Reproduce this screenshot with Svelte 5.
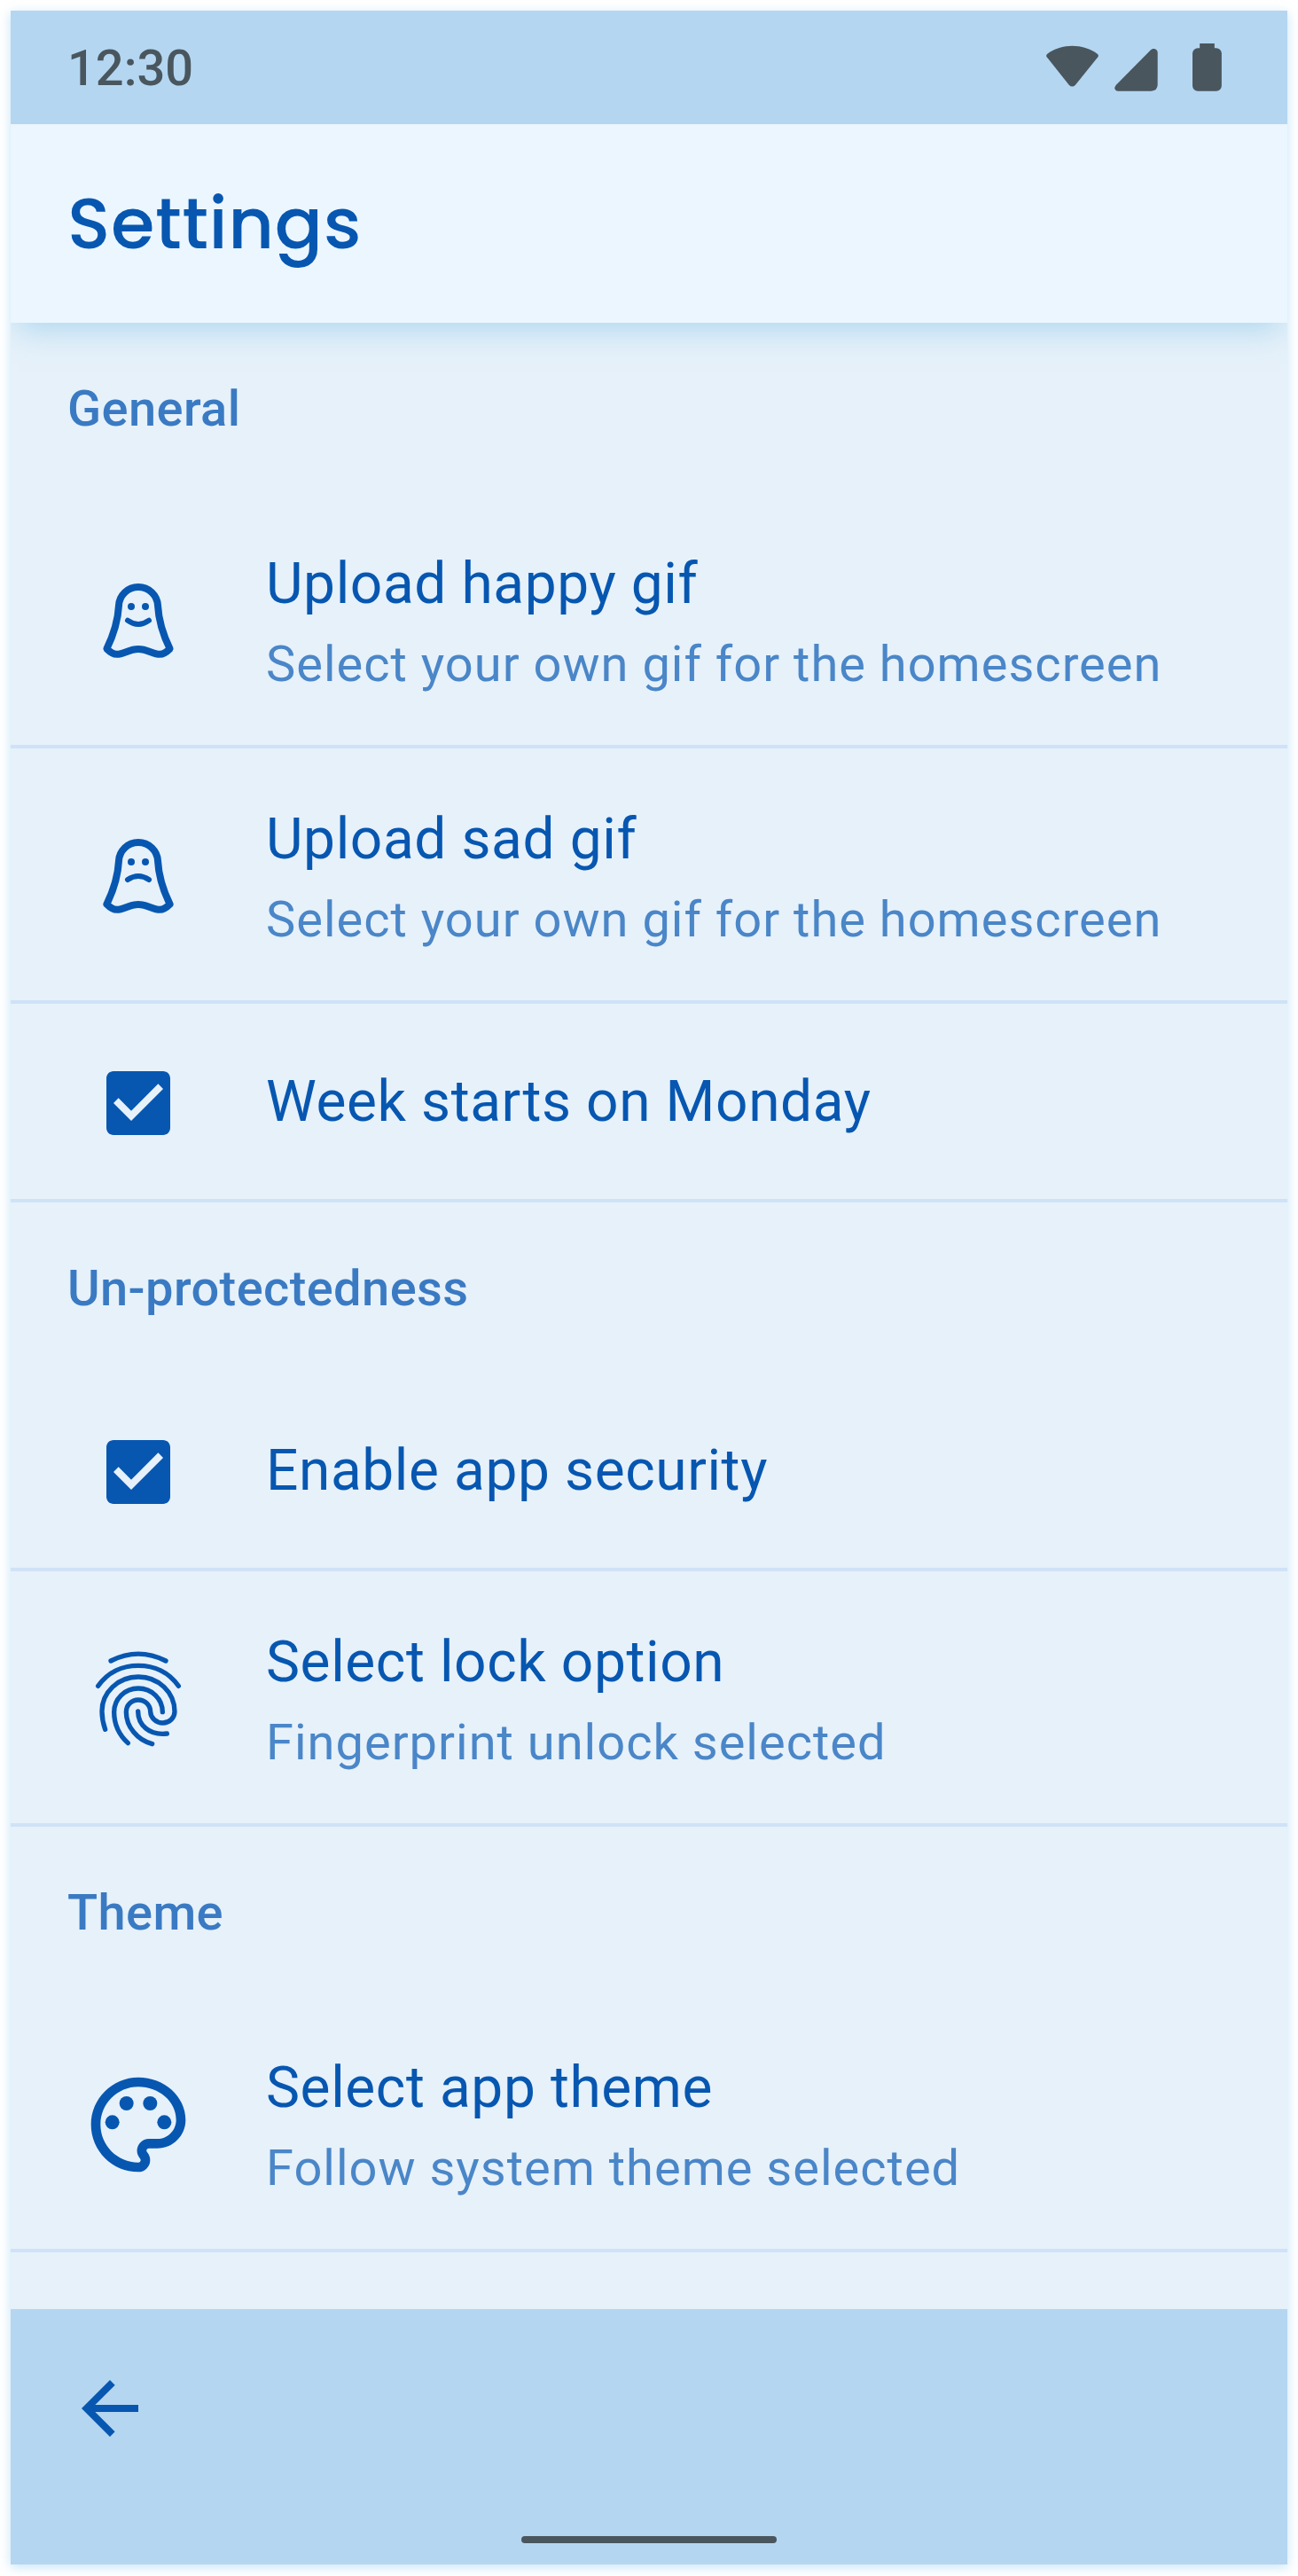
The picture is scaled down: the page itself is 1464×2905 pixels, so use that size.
<script>
  const sections = [
    {
      title: 'General',
      rows: [
        { icon: 'happy', title: 'Upload happy gif', detail: 'Select your own gif for the homescreen' },
        { icon: 'sad', title: 'Upload sad gif', detail: 'Select your own gif for the homescreen' },
        { icon: 'check', title: 'Week starts on Monday' }
      ]
    },
    {
      title: 'Un-protectedness',
      rows: [
        { icon: 'check', title: 'Enable app security' },
        { icon: 'finger', title: 'Select lock option', detail: 'Fingerprint unlock selected' }
      ]
    },
    {
      title: 'Theme',
      rows: [{ icon: 'palette', title: 'Select app theme', detail: 'Follow system theme selected' }]
    }
  ];
</script>

<div class="phone">
  <div class="status">
    <span class="time">12:30</span>
    <svg class="status-icons" viewBox="120 147 594 162" fill="currentColor">
      <path d="M124 182C173 146.500 243 146.500 293 182Q299 187 295 192.500L219 287Q208 298 197 287L122 192.500Q118 187 124 182Z" />
      <path d="M474 169C483 160 497 166 497 177V286Q497 308 475 308H364C352 308 348 297 356 288Z" />
      <rect x="615" y="163" width="98.500" height="145.500" rx="18" />
      <rect x="639.500" y="147" width="50" height="24" />
    </svg>
  </div>

  <header><h1>Settings</h1></header>

  <main>
    {#each sections as section}
      <h2>{section.title}</h2>
      {#each section.rows as row}
        <div class="row" class:tall={row.detail}>
          <div class="icon">
            {#if row.icon === 'happy' || row.icon === 'sad'}
              <svg class="small" viewBox="54 60 288 288" fill="none" stroke="currentColor" stroke-linejoin="round" stroke-linecap="round">
                <path stroke-width="24" d="M198 90C162 90 134 118 132 152C129 208 112 256 91 299C104 312 112 317.500 125 317.500C150 317.500 166 300 198 300C230 300 246 317.500 271 317.500C284 317.500 292 312 305 299C284 256 267 208 264 152C262 118 234 90 198 90Z" />
                <circle cx="174" cy="156" r="12" fill="currentColor" stroke="none" />
                <circle cx="222" cy="156" r="12" fill="currentColor" stroke="none" />
                <path stroke-width="18" d={row.icon === 'happy' ? 'M162 203Q198 229 234 203' : 'M162 216Q198 192 234 216'} />
              </svg>
            {:else if row.icon === 'check'}
              <svg class="small" viewBox="0 0 24 24" fill="currentColor">
                <path d="M19 3H5c-1.110 0-2 .9-2 2v14c0 1.100.89 2 2 2h14c1.110 0 2-.9 2-2V5c0-1.100-.89-2-2-2zm-9 14l-5-5 1.410-1.410L10 14.170l7.590-7.590L19 8l-9 9z" />
              </svg>
            {:else if row.icon === 'finger'}
              <svg class="large" viewBox="6 36 384 384" fill="none" stroke="currentColor" stroke-width="16" stroke-linecap="round" stroke-linejoin="round">
                <path d="M105 99Q198 52 291 99" />
                <path d="M62 184C95 137 145 115 198 115S301 137 334 184" />
                <path d="M86 331C79 311 75 292 75 269C75 205 130 153 198 153C266 153 321 205 321 271C321 292 303 309 281 309C258 309 240 292 239 271C239 249 221 231 198 231C175 231 157 249 157 272C157 322 195 367 245 380" />
                <path d="M163 377C133 349 116 316 116 272C116 228 152 192 198 192C244 192 280 228 280 272" />
                <path d="M197 270C197 316 235 352 295 345" />
              </svg>
            {:else}
              <svg class="large" viewBox="0 0 24 24" fill="currentColor">
                <path d="M12 22C6.490 22 2 17.510 2 12S6.490 2 12 2s10 4.040 10 9c0 3.310-2.690 6-6 6h-1.770c-.28 0-.5.22-.5.5 0 .12.050.23.130.33.410.47.640 1.060.640 1.670A2.500 2.500 0 0 1 12 22zm0-18c-4.410 0-8 3.590-8 8s3.590 8 8 8c.28 0 .5-.22.5-.5a.54.54 0 0 0-.14-.35c-.41-.46-.63-1.050-.63-1.650a2.500 2.500 0 0 1 2.500-2.500H16c2.210 0 4-1.790 4-4 0-3.860-3.590-7-8-7z" />
                <circle cx="6.500" cy="11.500" r="1.500" />
                <circle cx="9.500" cy="7.500" r="1.500" />
                <circle cx="14.500" cy="7.500" r="1.500" />
                <circle cx="17.500" cy="11.500" r="1.500" />
              </svg>
            {/if}
          </div>
          <div class="copy">
            <div class="title">{row.title}</div>
            {#if row.detail}<div class="detail">{row.detail}</div>{/if}
          </div>
        </div>
      {/each}
    {/each}
  </main>

  <nav>
    <svg class="small back" viewBox="0 0 24 24" fill="currentColor">
      <path d="M20 11H7.830l5.590-5.590L12 4l-8 8 8 8 1.410-1.410L7.830 13H20v-2z" />
    </svg>
    <div class="home"></div>
  </nav>
</div>

<style>
  :global(body) {
    background: #fff;
  }
  .phone {
    box-sizing: border-box;
    width: 1440px;
    height: 2880px;
    margin: 12px;
    display: flex;
    flex-direction: column;
    background: #e6f1fa;
    color: #0757b1;
    font-family: Roboto, sans-serif;
    box-shadow: 0 3px 12px rgba(120, 190, 235, 0.42);
  }
  .status {
    height: 128px;
    display: flex;
    align-items: center;
    justify-content: space-between;
    padding: 0 74px 0 64px;
    box-sizing: border-box;
    background: #b4d6f1;
    color: #49565e;
  }
  .time {
    padding-top: 2px;
    font-size: 56px;
    font-weight: 500;
    line-height: 64px;
  }
  .status-icons {
    width: 198px;
    height: 54px;
  }
  header {
    height: 224px;
    box-sizing: border-box;
    padding: 0 64px;
    display: flex;
    align-items: center;
    background: #ebf6ff;
    box-shadow: 0 16px 32px -8px rgba(130, 195, 230, 0.55);
    clip-path: inset(0 0 -60px 0);
  }
  h1 {
    margin: 0;
    font-family: Poppins, Inter, sans-serif;
    font-size: 80px;
    font-weight: 500;
    line-height: 96px;
    letter-spacing: 0.6px;
  }
  main {
    flex: 1;
  }
  h2 {
    box-sizing: border-box;
    height: 192px;
    margin: 0;
    padding: 65px 64px 0;
    font-size: 56px;
    font-weight: 500;
    line-height: 64px;
    letter-spacing: 0.4px;
    color: #3a7ac3;
  }
  .row {
    box-sizing: border-box;
    height: 224px;
    display: flex;
    align-items: center;
    border-bottom: 4px solid #cfe2f7;
    padding-top: 4px;
  }
  .row.tall {
    height: 288px;
  }
  .icon {
    width: 288px;
    display: flex;
    justify-content: center;
  }
  svg {
    display: block;
  }
  .small {
    width: 96px;
    height: 96px;
  }
  .large {
    width: 128px;
    height: 128px;
  }
  .copy {
    flex: 1;
    white-space: nowrap;
  }
  .title {
    padding-bottom: 2px;
    font-size: 64px;
    line-height: 96px;
    letter-spacing: 0.6px;
  }
  .detail {
    font-size: 56px;
    line-height: 80px;
    letter-spacing: 1px;
    color: #4a86c8;
  }
  nav {
    height: 288px;
    box-sizing: border-box;
    padding: 64px 64px 24px;
    display: flex;
    flex-direction: column;
    justify-content: space-between;
    background: #b4d6f1;
  }
  .home {
    width: 288px;
    height: 8px;
    border-radius: 4px;
    align-self: center;
    background: #49565e;
  }
</style>
